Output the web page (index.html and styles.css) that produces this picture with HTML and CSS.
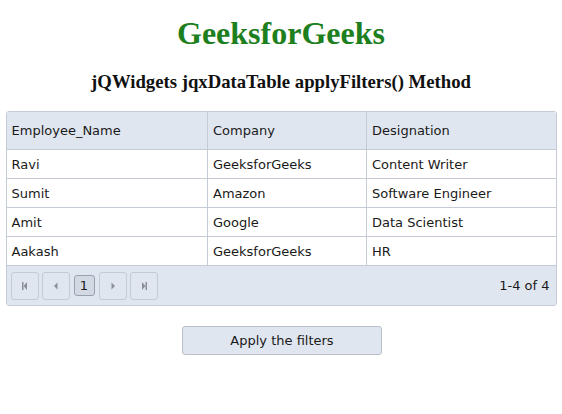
FILE: index.html
```html
<!DOCTYPE html>
<html>
<head>
<meta charset="utf-8">
<link rel="stylesheet" href="styles.css">
</head>
<body>
<h1 class="title">GeeksforGeeks</h1>
<h3 class="subtitle">jQWidgets jqxDataTable applyFilters() Method</h3>
<div class="grid">
  <table class="data">
    <colgroup><col class="c1"><col class="c2"><col class="c3"></colgroup>
    <thead>
      <tr><th>Employee_Name</th><th>Company</th><th>Designation</th></tr>
    </thead>
    <tbody>
      <tr><td>Ravi</td><td>GeeksforGeeks</td><td>Content Writer</td></tr>
      <tr><td>Sumit</td><td>Amazon</td><td>Software Engineer</td></tr>
      <tr><td>Amit</td><td>Google</td><td>Data Scientist</td></tr>
      <tr><td>Aakash</td><td>GeeksforGeeks</td><td>HR</td></tr>
    </tbody>
  </table>
  <div class="pager">
    <div class="nav">
      <span class="pbtn"><svg width="8" height="8" viewBox="0 0 8 8"><rect x="1" y="0" width="1.5" height="8" fill="#8a8f99"/><path d="M6 0 L2.5 4 L6 8 Z" fill="#8a8f99"/></svg></span>
      <span class="pbtn"><svg width="8" height="8" viewBox="0 0 8 8"><path d="M5.5 0.5 L2 4 L5.5 7.5 Z" fill="#8a8f99"/></svg></span>
      <span class="page">1</span>
      <span class="pbtn"><svg width="8" height="8" viewBox="0 0 8 8"><path d="M2.5 0.5 L6 4 L2.5 7.5 Z" fill="#8a8f99"/></svg></span>
      <span class="pbtn"><svg width="8" height="8" viewBox="0 0 8 8"><path d="M2 0 L5.5 4 L2 8 Z" fill="#8a8f99"/><rect x="5.5" y="0" width="1.5" height="8" fill="#8a8f99"/></svg></span>
    </div>
    <span class="info">1-4 of 4</span>
  </div>
</div>
<div class="actions">
  <button class="apply">Apply the filters</button>
</div>
</body>
</html>
```
FILE: styles.css
```css
body {
  margin: 0;
  font-family: "Liberation Serif", "Times New Roman", serif;
  background: #fff;
}
.title {
  margin: 15px 0 0;
  text-align: center;
  color: #1e7f1e;
  font-size: 32px;
  line-height: 37px;
  font-weight: bold;
}
.subtitle {
  margin: 19px 0 0;
  text-align: center;
  font-size: 18.72px;
  line-height: 22px;
  font-weight: bold;
  color: #111;
}
.grid {
  width: 551px;
  margin: 18px auto 0;
  border: 1px solid #c5cbd5;
  border-radius: 3px;
  overflow: hidden;
  font-family: "DejaVu Sans", Verdana, sans-serif;
  font-size: 13px;
  color: #1a1a1a;
  box-sizing: border-box;
}
.data {
  width: 100%;
  border-collapse: collapse;
  table-layout: fixed;
}
.c1 { width: 201px; }
.c2 { width: 159px; }
.c3 { width: auto; }
.data th {
  background: #e0e6f0;
  font-weight: normal;
  text-align: left;
  height: 37px;
  padding: 0 0 0 5px;
  border-left: 1px solid #c5cbd5;
  border-bottom: 1px solid #c5cbd5;
}
.data td {
  height: 28px;
  padding: 0 0 0 5px;
  border-left: 1px solid #c5cbd5;
  border-bottom: 1px solid #c5cbd5;
  white-space: nowrap;
  overflow: hidden;
}
.data th:first-child, .data td:first-child { border-left: none; }
.pager {
  background: #e0e6f0;
  height: 39px;
  display: flex;
  align-items: center;
  justify-content: space-between;
  padding: 0 6px 0 4px;
}
.nav {
  display: flex;
  align-items: center;
  gap: 3px;
}
.pbtn {
  border: 1px solid #c5cbd5;
  border-radius: 3px;
  display: flex;
  align-items: center;
  justify-content: center;
  box-sizing: border-box;
  width: 28px;
  height: 28px;
}
.page {
  width: 21px;
  height: 21px;
  margin: 0 1px;
  box-sizing: border-box;
  border: 1px solid #9aa1ad;
  border-radius: 3px;
  background: #d3d9e3;
  display: flex;
  align-items: center;
  justify-content: center;
  font-size: 13px;
  color: #1a1a1a;
}
.info { color: #1a1a1a; }
.actions {
  display: flex;
  justify-content: center;
  margin-top: 20px;
}
.apply {
  width: 200px;
  height: 29px;
  margin-left: 2px;
  background: #e0e6f0;
  border: 1px solid #b9c0cb;
  border-radius: 3px;
  font-family: "DejaVu Sans", Verdana, sans-serif;
  font-size: 13px;
  color: #1a1a1a;
  padding: 0;
}
```
